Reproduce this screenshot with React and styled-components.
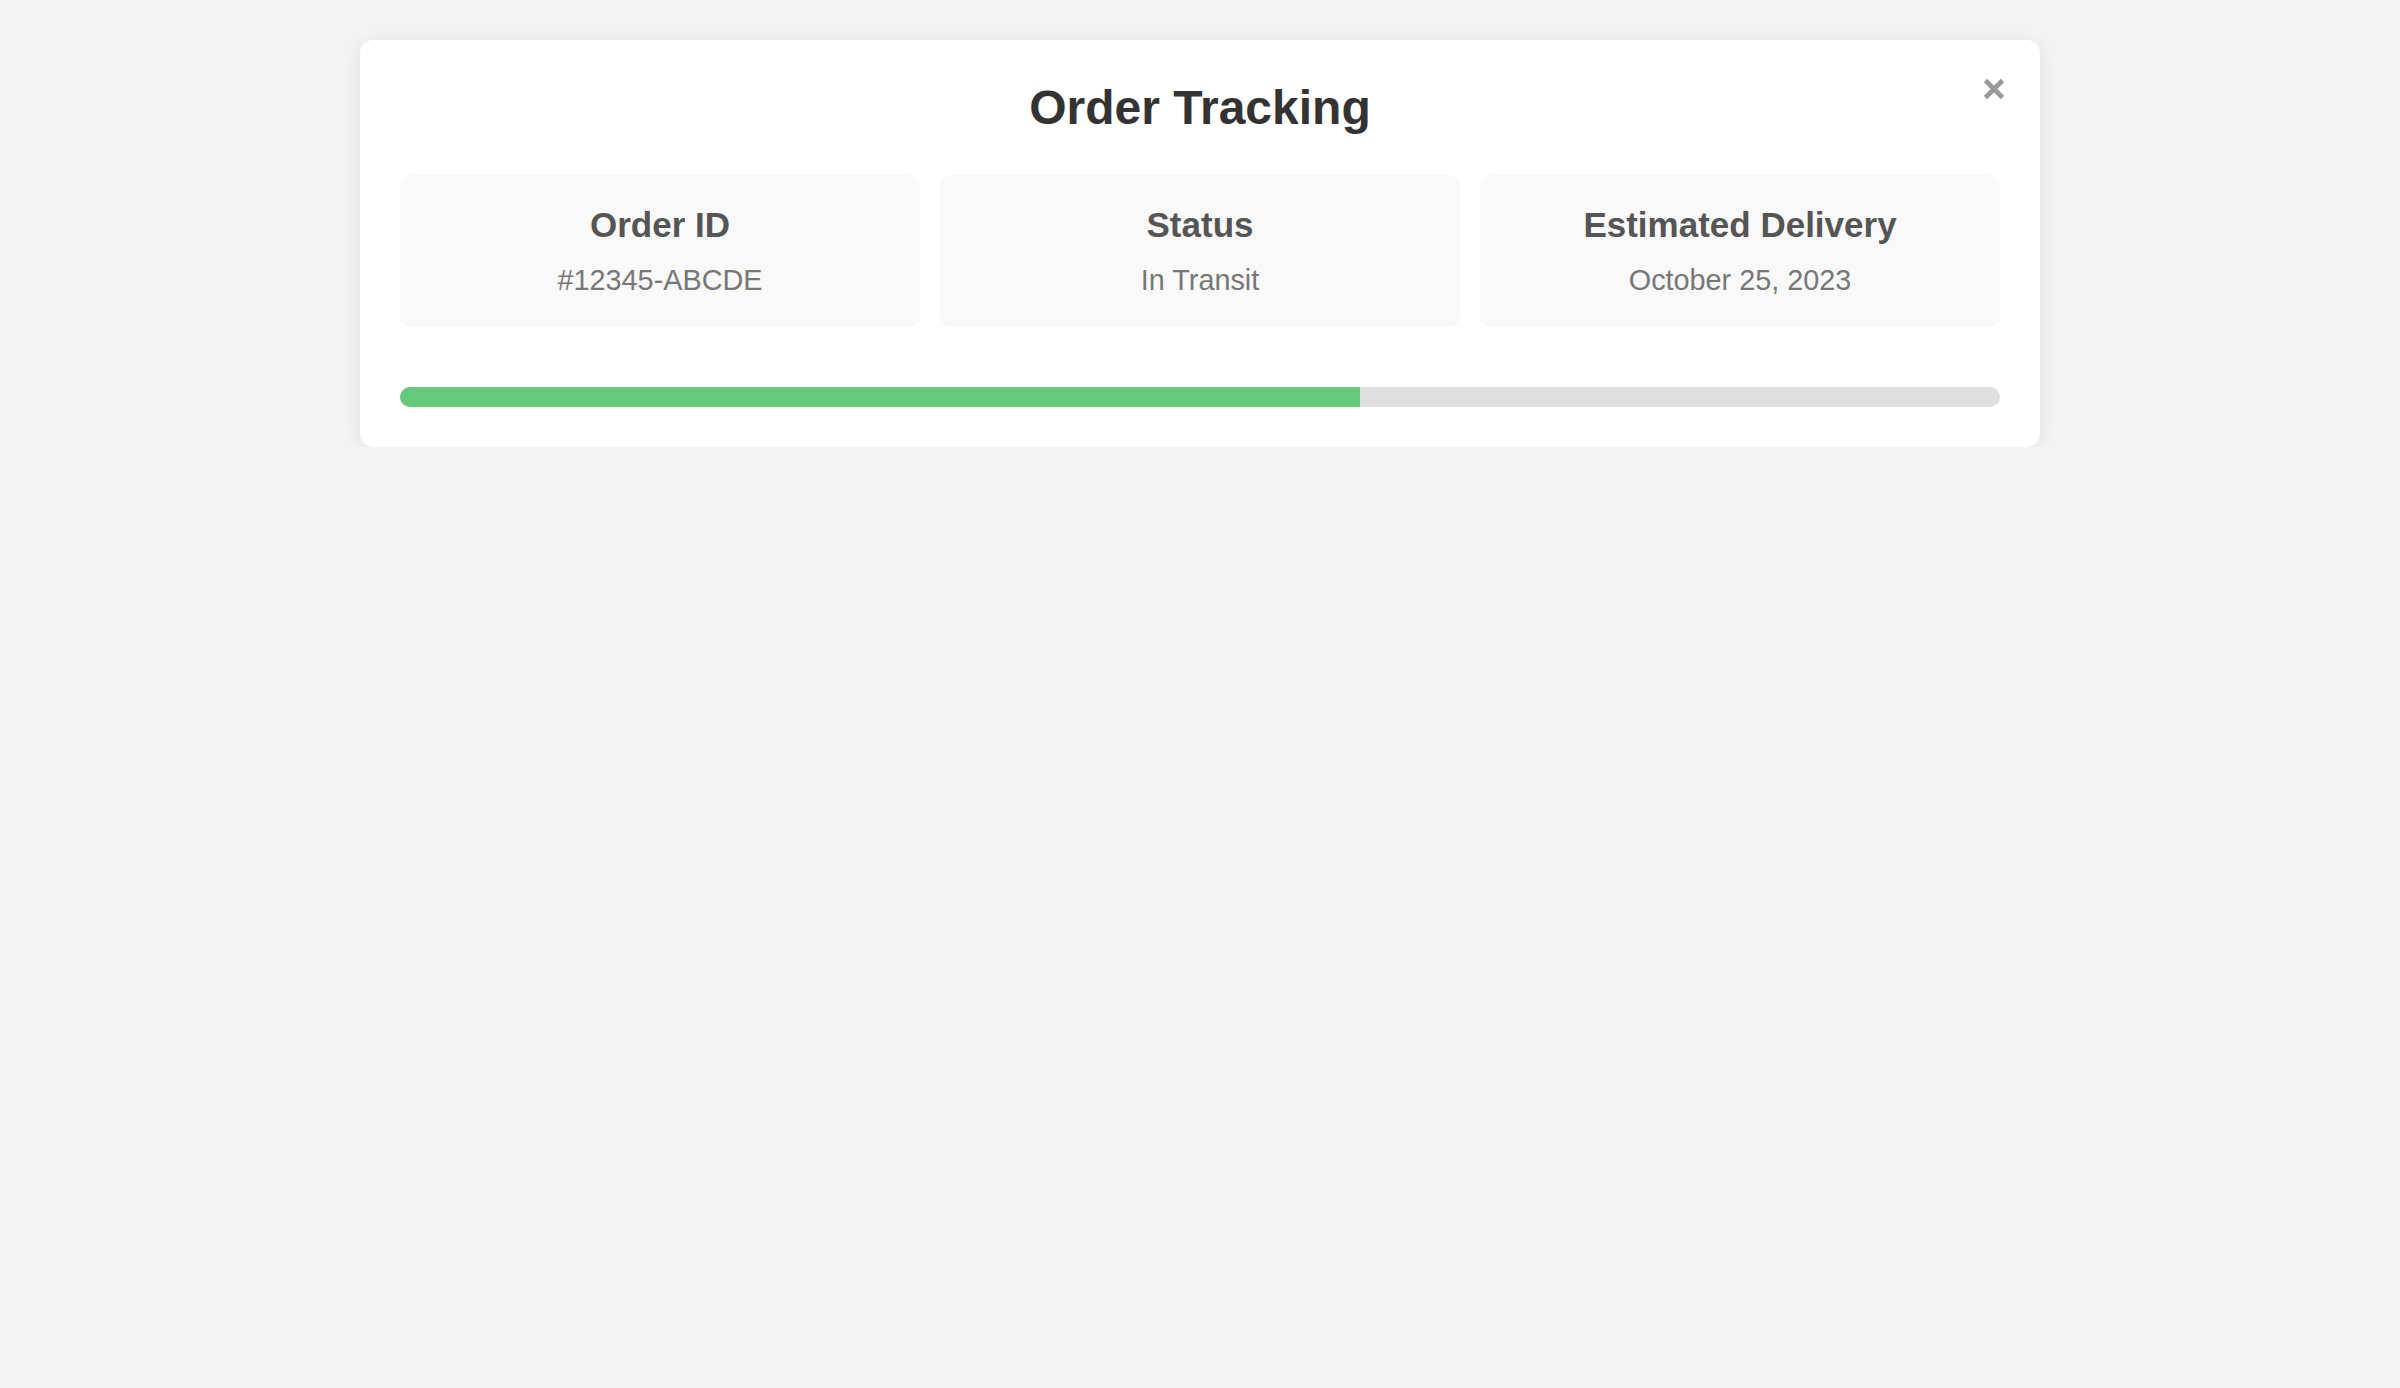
import React from "react";
import styled, { createGlobalStyle } from "styled-components";

const GlobalStyle = createGlobalStyle`
  html, body {
    margin: 0;
    padding: 0;
    background: #f4f4f4;
    font-family: "Liberation Sans", Arial, sans-serif;
  }
`;

const details = [
  { label: "Order ID", value: "#12345-ABCDE" },
  { label: "Status", value: "In Transit" },
  { label: "Estimated Delivery", value: "October 25, 2023" },
];

const App = () => {
  const progress = 60;
  return (
    <>
      <GlobalStyle />
      <Page>
        <Card>
          <CloseButton aria-label="Close">
            <svg width="22" height="22" viewBox="0 0 22 22">
              <path
                d="M2.5 2.5 L19.5 19.5 M19.5 2.5 L2.5 19.5"
                stroke="#999"
                strokeWidth="4.6"
                fill="none"
              />
            </svg>
          </CloseButton>
          <Title>Order Tracking</Title>
          <InfoGrid>
            {details.map((item) => (
              <InfoBox key={item.label}>
                <Label>{item.label}</Label>
                <Value>{item.value}</Value>
              </InfoBox>
            ))}
          </InfoGrid>
          <ProgressTrack>
            <ProgressFill style={{ width: `${progress}%` }} />
          </ProgressTrack>
        </Card>
      </Page>
    </>
  );
};

export default App;

const Page = styled.div`
  padding-top: 40px;
  display: flex;
  justify-content: center;
`;

const Card = styled.div`
  position: relative;
  width: 1680px;
  box-sizing: border-box;
  padding: 40px;
  background: #ffffff;
  border-radius: 13px;
  box-shadow: 0 4px 22px rgba(0, 0, 0, 0.09);
`;

const CloseButton = styled.button`
  position: absolute;
  top: 38px;
  right: 35px;
  width: 22px;
  height: 22px;
  padding: 0;
  border: none;
  background: none;
  cursor: pointer;
  svg {
    display: block;
  }
`;

const Title = styled.h2`
  margin: 0;
  font-size: 48px;
  font-weight: bold;
  color: #333333;
  text-align: center;
`;

const InfoGrid = styled.div`
  display: grid;
  grid-template-columns: repeat(3, 1fr);
  gap: 20px;
  margin-top: 40px;
`;

const InfoBox = styled.div`
  padding: 30px 20px;
  background: #f9f9f9;
  border-radius: 12px;
  text-align: center;
`;

const Label = styled.h3`
  margin: 0 0 19px;
  font-size: 35px;
  font-weight: bold;
  color: #555555;
`;

const Value = styled.p`
  margin: 0;
  font-size: 28.8px;
  color: #777777;
`;

const ProgressTrack = styled.div`
  margin-top: 60px;
  height: 20px;
  background: #e0e0e0;
  border-radius: 10px;
  overflow: hidden;
`;

const ProgressFill = styled.div`
  height: 100%;
  background: #66c97b;
`;
